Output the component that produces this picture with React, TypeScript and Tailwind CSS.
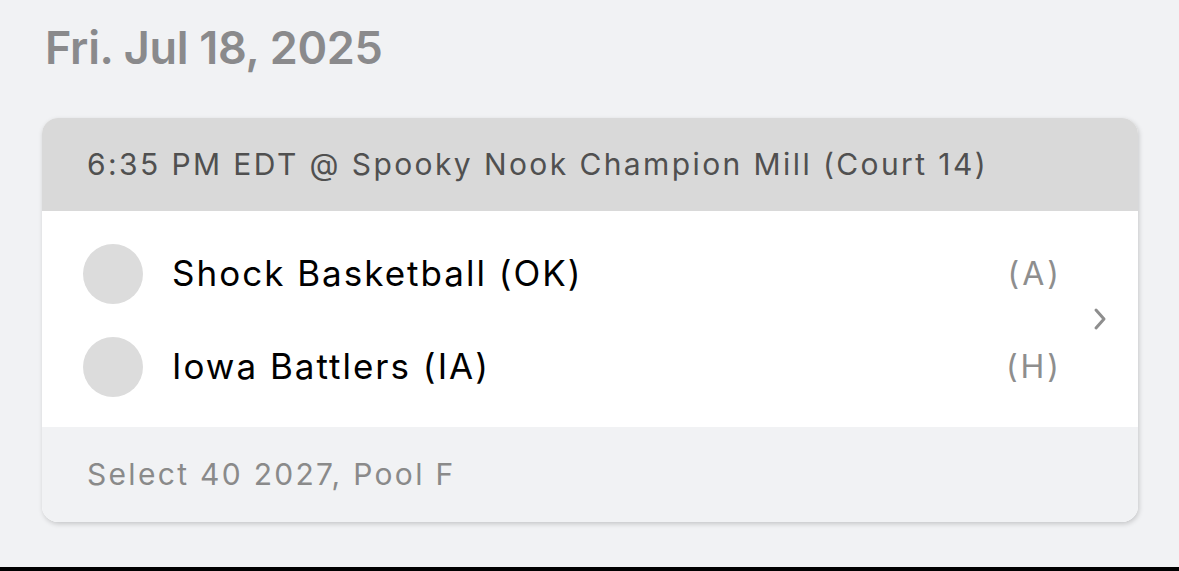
// Game schedule card

import React from "react";

const font = { fontFamily: "Inter, 'Noto Sans', sans-serif" };

function TeamRow({ name, side }: { name: string; side: string }) {
  return (
    <div className="h-[93px] flex items-center">
      <div className="w-[60px] h-[60px] rounded-full bg-[#dcdcdc] shrink-0" />
      <div className="ml-[29px] flex-1 text-[35px] text-black tracking-[2px]">{name}</div>
      <div className="text-[32px] text-[#8e8e8e] tracking-[3px]">{side}</div>
    </div>
  );
}

export default function App() {
  return (
    <div className="h-[571px] w-[1179px] bg-[#f1f2f4] flex flex-col overflow-hidden" style={font}>
      <div className="pl-[45px] pt-[14px] h-[118px] text-[45px] font-semibold text-[#8a8a8c] tracking-[-0.3px]">
        Fri. Jul 18, 2025
      </div>
      <div className="ml-[42px] w-[1096px] rounded-[16px] overflow-hidden bg-white shadow-[1px_2px_5px_rgba(0,0,0,0.18)]">
        <div className="h-[93px] bg-[#d9d9d9] px-[45px] flex items-center text-[30px] text-[#505050] tracking-[2.4px]">
          6:35 PM EDT @ Spooky Nook Champion Mill (Court 14)
        </div>
        <div className="h-[216px] bg-white flex items-center pl-[41px] pr-[30px]">
          <div className="flex-1 flex flex-col pt-[2px]">
            <TeamRow name="Shock Basketball (OK)" side="(A)" />
            <TeamRow name="Iowa Battlers (IA)" side="(H)" />
          </div>
          <svg width="16" height="26" viewBox="0 0 16 26" className="ml-[30px]">
            <polyline points="4,4 12,13 4,22" fill="none" stroke="#8e8e8e" strokeWidth="3" strokeLinecap="round" strokeLinejoin="round" />
          </svg>
        </div>
        <div className="h-[95px] bg-[#f1f2f4] px-[45px] flex items-center text-[30px] text-[#8a8a8a] tracking-[2.3px]">
          Select 40 2027, Pool F
        </div>
      </div>
      <div className="flex-1" />
      <div className="h-[4px] bg-black" />
    </div>
  );
}
